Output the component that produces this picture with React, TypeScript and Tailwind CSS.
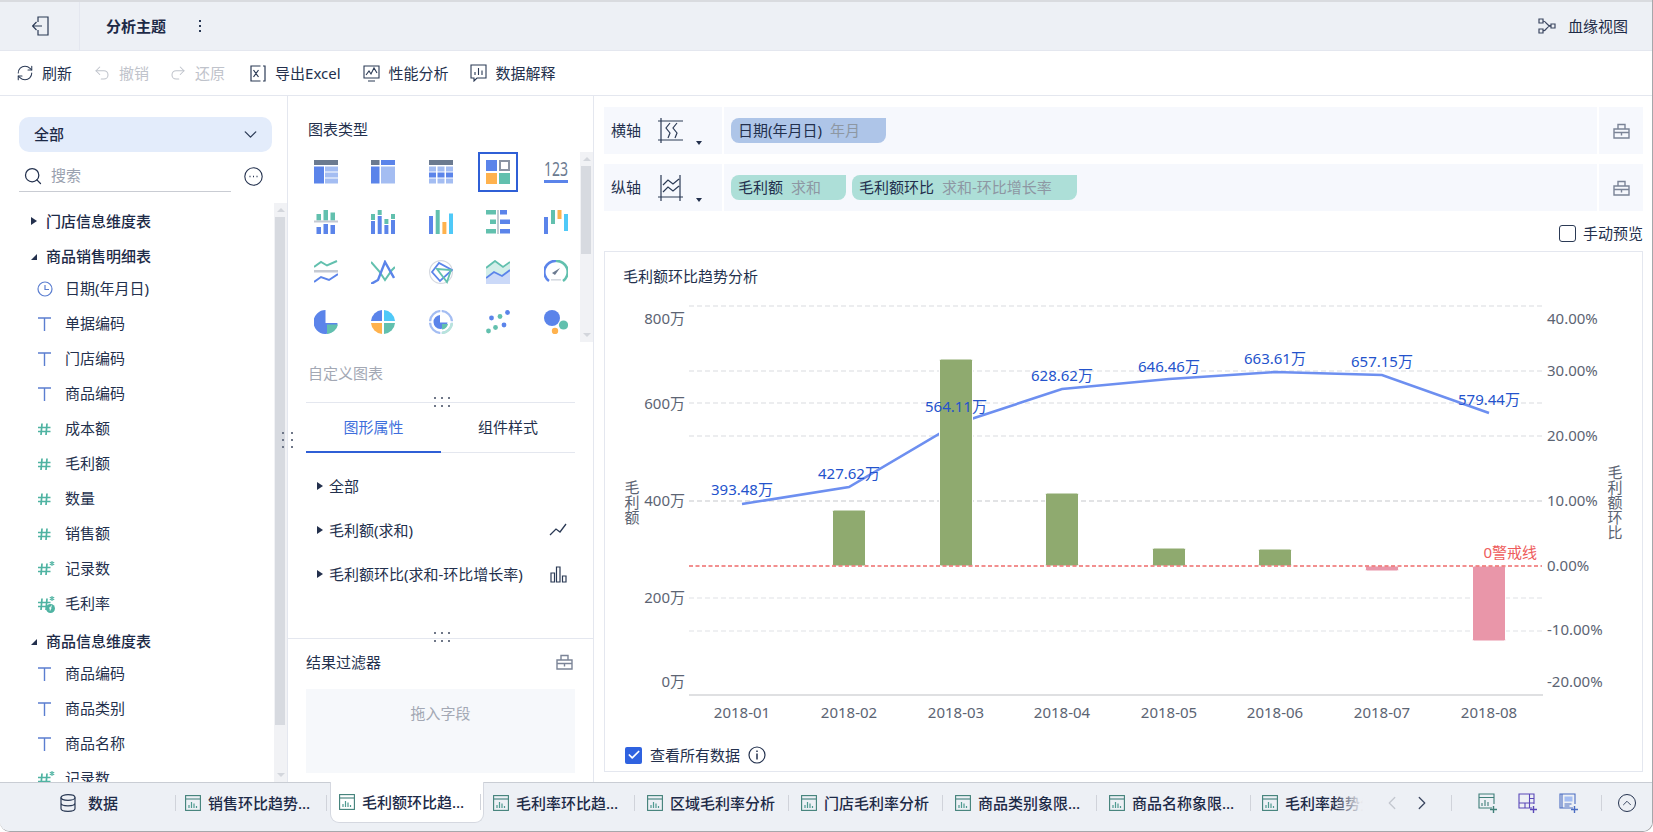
import type { ReactNode } from "react";
import { ChevronDown, ChevronLeft, ChevronRight, ChevronUp, Check, Redo2, RefreshCw, Search, Undo2 } from "lucide-react";

const G = "#6b7a90";
const B = "#5b84ea";
const L = "#a4bdf2";
const T = "#62c0ae";
const O = "#ffb24d";
const C = "#4fc9f8";

const chartIcons: ReactNode[] = [
  <>
    <rect width="24" height="5" fill={G} />
    <rect y="6.5" width="10" height="17" fill={B} />
    <rect x="11" y="6.5" width="13" height="5" fill={L} />
    <rect x="11" y="12.5" width="13" height="5" fill={L} />
    <rect x="11" y="18.5" width="13" height="5" fill={L} />
  </>,
  <>
    <rect width="8.5" height="5" fill={G} />
    <rect x="10" width="14" height="5" fill={B} />
    <rect y="6.5" width="8.5" height="17" fill={B} />
    <rect x="10" y="6.5" width="14" height="17" fill={L} />
  </>,
  <>
    <rect width="24" height="5" fill={G} />
    <rect y="6.5" width="7" height="5" fill={L} />
    <rect x="8.5" y="6.5" width="7" height="5" fill={L} />
    <rect x="17" y="6.5" width="7" height="5" fill={L} />
    <rect y="12.5" width="7" height="5" fill={B} />
    <rect x="8.5" y="12.5" width="7" height="5" fill={B} />
    <rect x="17" y="12.5" width="7" height="5" fill={B} />
    <rect y="18.5" width="7" height="5" fill={L} />
    <rect x="8.5" y="18.5" width="7" height="5" fill={L} />
    <rect x="17" y="18.5" width="7" height="5" fill={L} />
  </>,
  <>
    <rect width="11" height="11" fill={B} />
    <rect x="14" y="1" width="9" height="9" fill="none" stroke="#8b94a3" strokeWidth="2" />
    <rect y="13" width="11" height="11" fill={O} />
    <rect x="13" y="13" width="11" height="11" fill={T} />
  </>,
  <>
    <text x="0" y="16" fontSize="19" fill={G} textLength="24" lengthAdjust="spacingAndGlyphs">123</text>
    <rect y="20" width="24" height="3" fill={B} />
  </>,
  <>
    <rect x="2.5" y="4" width="4.5" height="6.5" fill={T} />
    <rect x="9.5" y="0" width="4.5" height="10.5" fill={T} />
    <rect x="16.5" y="2.5" width="4.5" height="8" fill={T} />
    <rect y="10.5" width="24" height="2" fill="#c5cad3" />
    <rect x="2.5" y="17" width="4.5" height="7" fill={B} />
    <rect x="9.5" y="14" width="4.5" height="10" fill={B} />
    <rect x="16.5" y="15" width="4.5" height="9" fill={B} />
  </>,
  <>
    <rect y="4" width="4" height="6" fill={T} />
    <rect y="11" width="4" height="13" fill={B} />
    <rect x="6.7" width="4" height="5" fill={T} />
    <rect x="6.7" y="6" width="4" height="18" fill={B} />
    <rect x="13.4" y="9" width="4" height="5" fill={T} />
    <rect x="13.4" y="15" width="4" height="9" fill={B} />
    <rect x="20" y="4" width="4" height="5" fill={T} />
    <rect x="20" y="10" width="4" height="14" fill={B} />
  </>,
  <>
    <rect y="6" width="4" height="18" fill={B} />
    <rect x="6.7" width="4" height="24" fill={T} />
    <rect x="13.4" y="12" width="4" height="12" fill={O} />
    <rect x="20" y="3.5" width="4" height="20.5" fill={C} />
  </>,
  <>
    <rect width="10" height="4.5" fill={T} />
    <rect x="4" y="9.5" width="6" height="4.5" fill={T} />
    <rect y="19" width="10" height="4.5" fill={T} />
    <rect x="11" width="2" height="24" fill="#c5cad3" />
    <rect x="14" y="0" width="7" height="4.5" fill={B} />
    <rect x="14" y="9.5" width="10" height="4.5" fill={B} />
    <rect x="14" y="19" width="10" height="4.5" fill={B} />
  </>,
  <>
    <rect y="7" width="4" height="17" fill={B} />
    <rect x="7" width="4" height="14" fill={T} />
    <rect x="13.5" width="4" height="9" fill={O} />
    <rect x="20" y="4" width="4" height="17" fill={C} />
  </>,
  <>
    <polyline points="0,7 7,2 13,5.5 23,1" fill="none" stroke={T} strokeWidth="2" />
    <rect y="10" width="24" height="2.5" fill="#c5cad3" />
    <polyline points="0,22 7,17 15,20 24,14" fill="none" stroke={B} strokeWidth="2" />
  </>,
  <>
    <polyline points="0,2 8,11 14,20 21,10 24,7" fill="none" stroke={T} strokeWidth="2" />
    <polyline points="0,24 7,20 14,2 23,18" fill="none" stroke={B} strokeWidth="2.4" />
  </>,
  <>
    <circle cx="12" cy="12" r="11.4" fill="none" stroke="#d5d9e0" strokeWidth="1.2" />
    <polygon points="3,12 10,3 23,10 11,21" fill="none" stroke={B} strokeWidth="1.8" />
    <polygon points="8,9 22,10 18,22" fill="none" stroke={T} strokeWidth="1.8" />
  </>,
  <>
    <polygon points="0,8 9,1 17,7 24,2 24,24 0,24" fill="#d3eee9" />
    <polygon points="0,18 8,12 16,16 24,10 24,24 0,24" fill="#cbd9f8" />
    <polyline points="0,8 9,1 17,7 24,2" fill="none" stroke={T} strokeWidth="1.8" />
    <polyline points="0,18 8,12 16,16 24,10" fill="none" stroke={B} strokeWidth="1.8" />
  </>,
  <>
    <path d="M5 21 A11 11 0 0 1 12 1" fill="none" stroke={B} strokeWidth="2.6" />
    <path d="M12 1 A11 11 0 0 1 19 21" fill="none" stroke={T} strokeWidth="2.6" />
    <path d="M8 13 L16 8 L11 15 Z" fill={G} />
    <rect x="7" y="19" width="10" height="1.6" fill="#d5d9e0" />
  </>,
  <>
    <path d="M11.5 0 A12 12 0 1 0 23.5 13 L11.5 13 Z" fill={B} />
    <path d="M13 14.5 L24 14.5 A12 12 0 0 1 13 24 Z" fill={T} />
  </>,
  <>
    <path d="M11 0 V11 H0 A12 12 0 0 1 11 0 Z" fill={B} />
    <path d="M13 0 A12 12 0 0 1 24 11 H13 Z" fill={C} />
    <path d="M11 24 V13 H0 A12 12 0 0 0 11 24 Z" fill={O} />
    <path d="M13 24 A12 12 0 0 0 24 13 H13 Z" fill={T} />
  </>,
  <>
    <circle cx="12" cy="12" r="11" fill="none" stroke={L} strokeWidth="2.2" />
    <path d="M13 23 A11 11 0 0 0 23 13" fill="none" stroke="#b8e4db" strokeWidth="2.4" />
    <path d="M12 0v3M12 21v3M0 12h3M21 12h3" stroke="#fff" strokeWidth="1.4" />
    <path d="M11 5 A7 7 0 1 0 18.500 12.500 H11 Z" fill={B} />
    <path d="M13 14 H19 A7 7 0 0 1 13 19.5 Z" fill={T} />
  </>,
  <>
    <circle cx="21.5" cy="2.5" r="2.4" fill={B} />
    <circle cx="5.5" cy="8" r="2.4" fill={B} />
    <circle cx="14" cy="6.5" r="2.4" fill={T} />
    <circle cx="18" cy="15" r="2.4" fill={B} />
    <circle cx="9.5" cy="17.5" r="2.4" fill={T} />
    <circle cx="2.5" cy="21" r="2.4" fill={T} />
  </>,
  <>
    <circle cx="8" cy="8" r="8" fill={B} />
    <circle cx="19.5" cy="15" r="4.6" fill={T} />
    <circle cx="11" cy="21" r="3.2" fill={O} />
  </>,
];

const TextType = () => (
  <svg width="16" height="16" viewBox="0 0 16 16" fill="none" stroke="#5b7ed0" strokeWidth="1.4">
    <path d="M1 2h13M7.5 2v13" />
  </svg>
);

const NumberType = ({ star, fx }: { star?: boolean; fx?: boolean }) => (
  <svg width="18" height="18" viewBox="0 0 18 18" fill="none" stroke="#4fb3a2" strokeWidth="1.7">
    <path d="M5 3.5 4 15M10 3.5 9 15M1 7.5h12.5M1 11.5h12.5" />
    {star && <path d="M15 1v5M12.8 2.2l4.4 2.6M17.2 2.2l-4.4 2.6" strokeWidth="1.1" />}
    {fx && <circle cx="13.5" cy="13.5" r="4.5" fill="#4fb3a2" stroke="none" />}
    {fx && <path d="M15 11c-1 0-1.300.5-1.400 1.300l-.5 3.200M12 13h2.500" stroke="#fff" strokeWidth="1" />}
  </svg>
);

const ClockType = () => (
  <svg width="16" height="16" viewBox="0 0 16 16" fill="none" stroke="#5b7ed0" strokeWidth="1.2">
    <circle cx="8" cy="8" r="7" />
    <path d="M8 4v4.5h4" />
  </svg>
);

const FilterIcon = () => (
  <svg width="17" height="16" viewBox="0 0 17 16" fill="none" stroke="#7b8497" strokeWidth="1.4">
    <path d="M1 6h15v9H1zM5 6V1.500h7V6M1 9.500h15M8.500 9.500v3" />
  </svg>
);

const Field = ({ icon, label }: { icon: ReactNode; label: string }) => (
  <div className="flex h-[35px] shrink-0 items-center pl-[37px]">
    <span className="flex w-[28px] shrink-0">{icon}</span>
    <span className="whitespace-nowrap text-[15px] text-[#23304d]">{label}</span>
  </div>
);

const Group = ({ label, open }: { label: string; open?: boolean }) => (
  <div className="flex h-[30px] shrink-0 items-center pl-[31px]">
    <span className="flex w-[15px] shrink-0">
      {open ? (
        <span className="mt-[2px] h-0 w-0 border-b-[6px] border-l-[6px] border-b-[#23304d] border-l-transparent" />
      ) : (
        <span className="h-0 w-0 border-y-[4.5px] border-l-[6px] border-y-transparent border-l-[#23304d]" />
      )}
    </span>
    <span className="whitespace-nowrap text-[15px] font-medium text-[#1d2a47]">{label}</span>
  </div>
);

const ScrollBar = ({ thumbTop, thumbHeight, className }: { thumbTop: string; thumbHeight: string; className: string }) => (
  <div className={`relative shrink-0 bg-[#f1f2f5] ${className}`}>
    <span className="absolute left-1/2 top-[5px] h-0 w-0 -translate-x-1/2 border-x-[4px] border-b-[4px] border-x-transparent border-b-[#d3d6dc]" />
    <div className={`absolute left-[1px] right-[2px] bg-[#d7dae0] ${thumbTop} ${thumbHeight}`} />
    <span className="absolute bottom-[5px] left-1/2 h-0 w-0 -translate-x-1/2 border-x-[4px] border-t-[4px] border-x-transparent border-t-[#d3d6dc]" />
  </div>
);

const LeftPanel = () => (
  <aside className="flex w-[288px] shrink-0 flex-col border-r border-[#e4e7ef]">
    <div className="px-[19px] pt-[21px]">
      <div className="flex h-[35px] w-[253px] items-center justify-between rounded-[10px] bg-[#e3ecfb] pl-[15px] pr-[11px]">
        <span className="text-[15px] font-medium text-[#1d2a47]">全部</span>
        <ChevronDown size={21} color="#2b3a55" strokeWidth={1.500} />
      </div>
      <div className="mt-[8px] flex h-[32px] items-center">
        <div className="flex h-full w-[212px] items-center gap-[8px] border-b border-[#c9ccd3] pl-[4px]">
          <Search size={20} color="#24324f" strokeWidth={1.5} />
          <span className="text-[15px] text-[#9aa1af]">搜索</span>
        </div>
        <svg width="19" height="19" viewBox="0 0 19 19" fill="none" stroke="#24324f" className="ml-[13px]">
          <circle cx="9.500" cy="9.500" r="8.700" strokeWidth="1.1" />
          <path d="M5.500 9.500h1M9 9.500h1M12.500 9.500h1" strokeWidth="1.400" />
        </svg>
      </div>
    </div>
    <div className="mt-[11px] flex min-h-0 flex-1">
      <div className="flex min-w-0 flex-1 flex-col overflow-hidden pt-[3px]">
        <Group label="门店信息维度表" />
        <div className="mt-[5px]">
          <Group label="商品销售明细表" open />
        </div>
        <Field icon={<ClockType />} label="日期(年月日)" />
        <Field icon={<TextType />} label="单据编码" />
        <Field icon={<TextType />} label="门店编码" />
        <Field icon={<TextType />} label="商品编码" />
        <Field icon={<NumberType />} label="成本额" />
        <Field icon={<NumberType />} label="毛利额" />
        <Field icon={<NumberType />} label="数量" />
        <Field icon={<NumberType />} label="销售额" />
        <Field icon={<NumberType star />} label="记录数" />
        <Field icon={<NumberType star fx />} label="毛利率" />
        <div className="mt-[5px]">
          <Group label="商品信息维度表" open />
        </div>
        <Field icon={<TextType />} label="商品编码" />
        <Field icon={<TextType />} label="商品类别" />
        <Field icon={<TextType />} label="商品名称" />
        <Field icon={<NumberType star />} label="记录数" />
      </div>
      <ScrollBar className="w-[13px]" thumbTop="top-[14px]" thumbHeight="h-[508px]" />
    </div>
  </aside>
);

const Dots = ({ className }: { className: string }) => (
  <div className={`absolute grid grid-cols-3 gap-x-[5px] gap-y-[6px] ${className}`}>
    {[0, 1, 2, 3, 4, 5].map((i) => (
      <span key={i} className="h-[2px] w-[2px] bg-[#6f7788]" />
    ))}
  </div>
);

const PropRow = ({ label, icon }: { label: string; icon?: ReactNode }) => (
  <div className="flex h-[44px] items-center pl-[29px] pr-[26px]">
    <span className="mr-[6px] h-0 w-0 border-y-[4.5px] border-l-[6px] border-y-transparent border-l-[#23304d]" />
    <span className="flex-1 whitespace-nowrap text-[15px] text-[#23304d]">{label}</span>
    {icon}
  </div>
);

const MiddlePanel = () => (
  <section className="relative flex w-[306px] shrink-0 flex-col border-r border-[#e4e7ef]">
    <div className="pl-[20px] pt-[22px] text-[15px] leading-[22px] text-[#23304d]">图表类型</div>
    <div className="mt-[7px] flex h-[200px] shrink-0">
      <div className="grid w-[292px] grid-cols-[repeat(5,57.5px)] grid-rows-[repeat(4,50px)] pl-[9px]">
        {chartIcons.map((icon, i) => (
          <div key={i} className="flex items-center justify-center">
            <div className={i === 3 ? "flex h-[40px] w-[40px] items-center justify-center border-2 border-[#2f5fd6]" : "flex h-[40px] w-[40px] items-center justify-center"}>
              <svg width="24" height="24" viewBox="0 0 24 24">
                {icon}
              </svg>
            </div>
          </div>
        ))}
      </div>
      <ScrollBar className="mt-[5px] h-[190px] w-[13px]" thumbTop="top-[14px]" thumbHeight="h-[88px]" />
    </div>
    <div className="mt-[15px] pl-[20px] text-[15px] leading-[22px] text-[#a3a8b4]">自定义图表</div>
    <Dots className="left-[146px] top-[301px]" />
    <div className="mx-[18px] mt-[18px] border-t border-[#e4e7ef]" />
    <div className="mx-[18px] flex h-[50px] border-b border-[#e4e7ef]">
      <div className="-mb-px flex w-[135px] items-center justify-center border-b-2 border-[#2f5fd6] text-[15px] text-[#3f6fdc]">图形属性</div>
      <div className="flex flex-1 items-center justify-center text-[15px] text-[#23304d]">组件样式</div>
    </div>
    <div className="mt-[11px]">
      <PropRow label="全部" />
      <PropRow
        label="毛利额(求和)"
        icon={
          <svg width="18" height="14" viewBox="0 0 18 14" fill="none" stroke="#2b3a55" strokeWidth="1.300">
            <path d="M1 12 7 6l4 3 6-8" />
          </svg>
        }
      />
      <PropRow
        label="毛利额环比(求和-环比增长率)"
        icon={
          <svg width="17" height="17" viewBox="0 0 17 17" fill="none" stroke="#2b3a55" strokeWidth="1.200">
            <path d="M1 7h3.500v9H1zM6.500 1H10v15H6.500zM12.500 10H16v6h-3.500z" />
          </svg>
        }
      />
    </div>
    <div className="mt-[42px] border-t border-[#e4e7ef]" />
    <Dots className="left-[146px] top-[536px]" />
    <div className="mt-[12px] flex items-center justify-between pl-[18px] pr-[20px] text-[15px] leading-[22px] text-[#23304d]">
      结果过滤器
      <FilterIcon />
    </div>
    <div className="mx-[18px] mt-[16px] flex h-[84px] justify-center bg-[#f6f8fb] pt-[13px] text-[15px] leading-[22px] text-[#a3a8b4]">拖入字段</div>
  </section>
);

const AxisRow = ({ label, icon, children }: { label: string; icon: ReactNode; children: ReactNode }) => (
  <div className="flex h-[47px] gap-[2px]">
    <div className="relative flex w-[118px] shrink-0 items-center bg-[#f6f8fd] pl-[7px]">
      <span className="text-[15px] text-[#23304d]">{label}</span>
      <span className="ml-[17px] flex">{icon}</span>
      <span className="absolute left-[92px] top-[34px] h-0 w-0 border-x-[3.5px] border-t-[4px] border-x-transparent border-t-[#23304d]" />
    </div>
    <div className="flex flex-1 items-start gap-[6px] bg-[#f6f8fd] pl-[7px] pt-[11px]">{children}</div>
    <div className="flex w-[44px] shrink-0 items-center justify-center bg-[#f6f8fd]">
      <FilterIcon />
    </div>
  </div>
);

const Pill = ({ name, sub, color, width }: { name: string; sub: string; color: string; width: string }) => (
  <div className={`flex h-[25px] items-center gap-[8px] rounded-l-[8px] rounded-br-[8px] pl-[7px] text-[15px] ${color} ${width}`}>
    <span className="text-[#23304d]">{name}</span>
    <span className="text-[#8d97a3]">{sub}</span>
  </div>
);

const grids = [
  { y: 306, c: "#e6e7ea" },
  { y: 371, c: "#e6e7ea" },
  { y: 403, c: "#e6e7ea" },
  { y: 436, c: "#e6e7ea" },
  { y: 501, c: "#d9dadd" },
  { y: 598, c: "#eaebee" },
  { y: 631, c: "#eaebee" },
];
const leftTicks = [
  ["800万", 318],
  ["600万", 403],
  ["400万", 500],
  ["200万", 597],
  ["0万", 681],
] as const;
const rightTicks = [
  ["40.00%", 318],
  ["30.00%", 370],
  ["20.00%", 435],
  ["10.00%", 500],
  ["0.00%", 565],
  ["-10.00%", 629],
  ["-20.00%", 681],
] as const;
const months = [
  { x: 742, name: "2018-01", line: 504, label: "393.48万", ly: 489 },
  { x: 849, name: "2018-02", line: 487, label: "427.62万", ly: 473, top: 510 },
  { x: 956, name: "2018-03", line: 424, label: "564.11万", ly: 406, top: 359 },
  { x: 1062, name: "2018-04", line: 389, label: "628.62万", ly: 375, top: 493 },
  { x: 1169, name: "2018-05", line: 379, label: "646.46万", ly: 366, top: 548 },
  { x: 1275, name: "2018-06", line: 372, label: "663.61万", ly: 358, top: 549 },
  { x: 1382, name: "2018-07", line: 375, label: "657.15万", ly: 361, bottom: 571 },
  { x: 1489, name: "2018-08", line: 413, label: "579.44万", ly: 399, bottom: 641 },
];

const Chart = () => (
  <svg width="1036" height="445" viewBox="605 290 1036 445" className="block text-[15px]">
    {grids.map((g) => (
      <line key={g.y} x1="689" x2="1542" y1={g.y} y2={g.y} stroke={g.c} strokeWidth="1.300" strokeDasharray="5 3" />
    ))}
    <line x1="689" x2="1543" y1="695" y2="695" stroke="#d5d6d9" strokeWidth="1.600" />
    {leftTicks.map(([t, y]) => (
      <text key={t} x="685" y={y} textAnchor="end" dominantBaseline="central" fill="#5c6473">
        {t}
      </text>
    ))}
    {rightTicks.map(([t, y]) => (
      <text key={t} x="1547" y={y} dominantBaseline="central" fill="#5c6473">
        {t}
      </text>
    ))}
    {["毛", "利", "额"].map((c, i) => (
      <text key={i} x="632" y={487 + i * 15} textAnchor="middle" dominantBaseline="central" fill="#5c6473">
        {c}
      </text>
    ))}
    {["毛", "利", "额", "环", "比"].map((c, i) => (
      <text key={i} x="1615" y={472 + i * 15} textAnchor="middle" dominantBaseline="central" fill="#5c6473">
        {c}
      </text>
    ))}
    <polyline points={months.map((m) => `${m.x},${m.line}`).join(" ")} fill="none" stroke="#6d8ff0" strokeWidth="2.600" />
    {months.map((m) =>
      m.top ? (
        <rect key={m.name} x={m.x - 16.500} y={m.top} width="33" height={566 - m.top} rx="1.500" fill="#8faa6f" stroke="#fff" strokeWidth="1" />
      ) : m.bottom ? (
        <rect key={m.name} x={m.x - 16.500} y="566" width="33" height={m.bottom - 566} rx="1.500" fill="#e996a9" stroke="#fff" strokeWidth="1" />
      ) : null,
    )}
    <line x1="689" x2="1542" y1="566" y2="566" stroke="#ee6b6b" strokeWidth="1.300" strokeDasharray="4 2.500" />
    <text x="1537" y="552" textAnchor="end" dominantBaseline="central" fill="#ee5c5c">
      0警戒线
    </text>
    {months.map((m) => (
      <text key={m.label} x={m.x} y={m.ly} textAnchor="middle" dominantBaseline="central" fill="#2453cc">
        {m.label}
      </text>
    ))}
    {months.map((m) => (
      <text key={m.name} x={m.x} y="712" textAnchor="middle" dominantBaseline="central" fill="#5c6473">
        {m.name}
      </text>
    ))}
  </svg>
);

const RightPanel = () => (
  <section className="flex min-w-0 flex-1 flex-col pl-[10px] pr-[9px] pt-[11px]">
    <div className="flex flex-col gap-[10px]">
      <AxisRow
        label="横轴"
        icon={
          <svg width="26" height="26" viewBox="0 0 26 26" fill="none" stroke="#2b3a55" strokeWidth="1.200">
            <path d="M3 0v25M0 3h25M0 22h25M12 5 8 10l4 5-2 5M19 5l-4 5 4 5-2 5" />
          </svg>
        }
      >
        <Pill name="日期(年月日)" sub="年月" color="bg-[#aec5e8]" width="w-[155px]" />
      </AxisRow>
      <AxisRow
        label="纵轴"
        icon={
          <svg width="26" height="26" viewBox="0 0 26 26" fill="none" stroke="#2b3a55" strokeWidth="1.200">
            <path d="M3 0v26M22 0v26M0 22h25M5 10l5-5 5 4 6-5M5 17l5-5 5 4 6-5" />
          </svg>
        }
      >
        <Pill name="毛利额" sub="求和" color="bg-[#addfd8]" width="w-[115px]" />
        <Pill name="毛利额环比" sub="求和-环比增长率" color="bg-[#addfd8]" width="w-[225px]" />
      </AxisRow>
    </div>
    <div className="flex h-[40px] shrink-0 items-center justify-end gap-[7px] pt-[4px]">
      <span className="h-[17px] w-[17px] rounded-[3px] border border-[#2b3a55]" />
      <span className="text-[15px] text-[#23304d]">手动预览</span>
    </div>
    <div className="h-[521px] shrink-0 border border-[#e4e7ef]">
      <div className="h-[38px] pl-[18px] pt-[10px] text-[15px] leading-[28px] text-[#23304d]">毛利额环比趋势分析</div>
      <Chart />
      <div className="flex h-[36px] items-center pl-[20px] pt-[4px]">
        <span className="flex h-[17px] w-[17px] items-center justify-center rounded-[2px] bg-[#2f62e0]">
          <Check size={14} color="#fff" strokeWidth={3} />
        </span>
        <span className="ml-[8px] text-[15px] text-[#23304d]">查看所有数据</span>
        <svg width="18" height="18" viewBox="0 0 18 18" fill="none" stroke="#24324f" className="ml-[8px]">
          <circle cx="9" cy="9" r="8" strokeWidth="1.200" />
          <path d="M9 7.500v6M9 4.500v1.600" strokeWidth="1.500" />
        </svg>
      </div>
    </div>
  </section>
);

const SheetIcon = () => (
  <svg width="16" height="16" viewBox="0 0 16 16" fill="none" stroke="#3f7f78" strokeWidth="1.100" className="shrink-0">
    <rect x="0.600" y="0.600" width="14.800" height="14.800" />
    <path d="M1 4h14" />
    <path d="M4 13v-3M6.500 13V7M9 13V8.500M11.500 13v-2" stroke="#4f9a90" strokeWidth="1.200" />
  </svg>
);

const Tab = ({ label, active }: { label: string; active?: boolean }) => (
  <div className={active ? "-mt-px flex h-[41px] w-[154px] shrink-0 items-center rounded-b-[9px] border-x border-b border-[#d5d8e0] bg-white pl-[8px]" : "flex h-[40px] w-[154px] shrink-0 items-center pl-[9px]"}>
    <SheetIcon />
    <span className="ml-[7px] w-[105px] truncate text-[15px] font-medium text-[#1d2a47]">{label}</span>
    <span className="ml-[13px] h-[16px] w-px bg-[#d0d3da]" />
  </div>
);

const BottomBar = () => (
  <footer className="flex h-[49px] shrink-0 items-start border-t border-[#c9cdd4] bg-[#edf0f5]">
    <div className="flex h-[40px] w-[175px] shrink-0 items-center pl-[60px]">
      <svg width="16" height="18" viewBox="0 0 16 18" fill="none" stroke="#2b3a55" strokeWidth="1.200">
        <ellipse cx="8" cy="3.500" rx="7" ry="2.800" />
        <path d="M1 3.500v11c0 1.500 3 2.800 7 2.800s7-1.300 7-2.800v-11M1 9c0 1.500 3 2.800 7 2.800s7-1.300 7-2.800" />
      </svg>
      <span className="ml-[12px] text-[15px] font-medium text-[#1d2a47]">数据</span>
    </div>
    <span className="mt-[12px] h-[16px] w-px shrink-0 bg-[#d0d3da]" />
    <Tab label="销售环比趋势分析" />
    <Tab label="毛利额环比趋势分析" active />
    <Tab label="毛利率环比趋势分析" />
    <Tab label="区域毛利率分析" />
    <Tab label="门店毛利率分析" />
    <Tab label="商品类别象限分析" />
    <Tab label="商品名称象限分析" />
    <div className="flex h-[40px] w-[120px] shrink-0 items-center pl-[8px]">
      <SheetIcon />
      <div className="relative ml-[7px] w-[78px] overflow-hidden whitespace-nowrap text-[15px] font-medium text-[#1d2a47]">
        毛利率趋势分析
        <span className="absolute inset-y-0 right-0 w-[30px] bg-gradient-to-r from-transparent to-[#edf0f5]" />
      </div>
    </div>
    <div className="flex h-[40px] items-center">
      <ChevronLeft size={22} color="#c3c7cf" strokeWidth={1.400} className="ml-[7px]" />
      <ChevronRight size={22} color="#3b4660" strokeWidth={1.400} className="ml-[8px]" />
      <span className="ml-[18px] h-[16px] w-px bg-[#d0d3da]" />
      <svg width="20" height="20" viewBox="0 0 20 20" fill="none" stroke="#3f7f78" strokeWidth="1.100" className="ml-[26px]">
        <path d="M14 15H1V1h15v10M1 4.500h15M4 13v-3M7 13V7M10 13V9" />
        <path d="M12 16.500h7M15.500 13v7" strokeWidth="1.400" />
      </svg>
      <svg width="20" height="20" viewBox="0 0 20 20" fill="none" stroke="#5a48b8" strokeWidth="1.100" className="ml-[20px]">
        <path d="M14 15H1V1h15v10M1 10h15M7 10v5M11.500 1v14M11.500 5.500H16" />
        <path d="M12 16.500h7M15.500 13v7" strokeWidth="1.400" />
      </svg>
      <svg width="20" height="20" viewBox="0 0 20 20" fill="none" stroke="#4a6cc2" strokeWidth="1.100" className="ml-[21px]">
        <path d="M14 15H1V1h15v10M3 1v14" />
        <path d="M5.500 3.500h8v5h-8z" fill="#a4bdf2" stroke="none" />
        <path d="M5.500 11h7M5.500 13h5" />
        <path d="M12 16.500h7M15.500 13v7" strokeWidth="1.400" />
      </svg>
      <span className="ml-[22px] h-[16px] w-px bg-[#d0d3da]" />
      <span className="ml-[16px] flex h-[18px] w-[18px] items-center justify-center rounded-full border border-[#24324f]">
        <ChevronUp size={14} color="#24324f" strokeWidth={1.500} />
      </span>
    </div>
  </footer>
);

const ToolItem = ({ icon, label, muted, className }: { icon: ReactNode; label: string; muted?: boolean; className?: string }) => (
  <div className={`flex items-center gap-[8px] ${className ?? ""}`}>
    <span className="flex w-[18px] justify-center">{icon}</span>
    <span className={muted ? "text-[15px] text-[#bfc3cb]" : "text-[15px] text-[#23304d]"}>{label}</span>
  </div>
);

const App = () => {
  return (
    <div className="flex h-[832px] w-[1653px] flex-col overflow-hidden rounded-b-[10px] border-b border-r border-[#a5a7ab] font-['Noto_Sans','Noto_Sans_CJK_SC',sans-serif]">
      <header className="flex h-[51px] shrink-0 items-center border-b border-t-2 border-b-[#e4e7ef] border-t-[#d9dbdf] bg-[#edf0f5]">
        <div className="flex h-full w-[80px] items-center justify-center border-r border-[#e4e7ef]">
          <svg width="17" height="20" viewBox="0 0 17 20" fill="none" stroke="#2b3a55" strokeWidth="1.200" className="ml-[2px]">
            <path d="M6 6V1h10v18H6v-5M0.500 10H10M4.500 6l-4 4 4 4" />
          </svg>
        </div>
        <span className="ml-[26px] text-[15px] font-semibold text-[#1d2a47]">分析主题</span>
        <span className="ml-[33px] flex flex-col gap-[3px]">
          <span className="h-[2px] w-[2px] bg-[#2b3a55]" />
          <span className="h-[2px] w-[2px] bg-[#2b3a55]" />
          <span className="h-[2px] w-[2px] bg-[#2b3a55]" />
        </span>
        <div className="ml-auto flex items-center gap-[12px] pr-[24px]">
          <svg width="18" height="16" viewBox="0 0 18 16" fill="none" stroke="#3b4660" strokeWidth="1.200">
            <path d="M1 1h4v4H1zM1 11h4v4H1zM13 6h4v4h-4zM5 3c4 0 3 5 8 5M5 13c4 0 3-5 8-5" />
          </svg>
          <span className="text-[15px] text-[#1d2a47]">血缘视图</span>
        </div>
      </header>
      <div className="flex h-[45px] shrink-0 items-center border-b border-[#e4e7ef] bg-white pl-[16px]">
        <ToolItem icon={<RefreshCw size={18} color="#2b3a55" strokeWidth={1.400} />} label="刷新" />
        <ToolItem icon={<Undo2 size={18} color="#bfc3cb" strokeWidth={1.400} />} label="撤销" muted className="ml-[21px]" />
        <ToolItem icon={<Redo2 size={18} color="#bfc3cb" strokeWidth={1.400} />} label="还原" muted className="ml-[20px]" />
        <ToolItem
          icon={
            <svg width="16" height="17" viewBox="0 0 16 17" fill="none" stroke="#2b3a55" strokeWidth="1.200">
              <path d="M10.500 1H1v15h9.500M13 1h2v15h-2M3.500 5l5 7M8.500 5l-5 7" />
            </svg>
          }
          label="导出Excel"
          className="ml-[24px]"
        />
        <ToolItem
          icon={
            <svg width="17" height="17" viewBox="0 0 17 17" fill="none" stroke="#2b3a55" strokeWidth="1.100">
              <path d="M1 1h15v12H1zM5 16h7M3 10l3-4 2 3 3-6 3 5" />
            </svg>
          }
          label="性能分析"
          className="ml-[22px]"
        />
        <ToolItem
          icon={
            <svg width="17" height="18" viewBox="0 0 17 18" fill="none" stroke="#2b3a55" strokeWidth="1.100">
              <path d="M1 1h15v13H7l-3 3v-3H1zM5 11V8M8.500 11V4M12 11V6.500" />
            </svg>
          }
          label="数据解释"
          className="ml-[21px]"
        />
      </div>
      <main className="relative flex min-h-0 flex-1 bg-white">
        <LeftPanel />
        <MiddlePanel />
        <RightPanel />
        <Dots className="left-[282px] top-[336px] !grid-cols-2 !gap-x-[7px] !gap-y-[5px]" />
      </main>
      <BottomBar />
    </div>
  );
};

export default App;
